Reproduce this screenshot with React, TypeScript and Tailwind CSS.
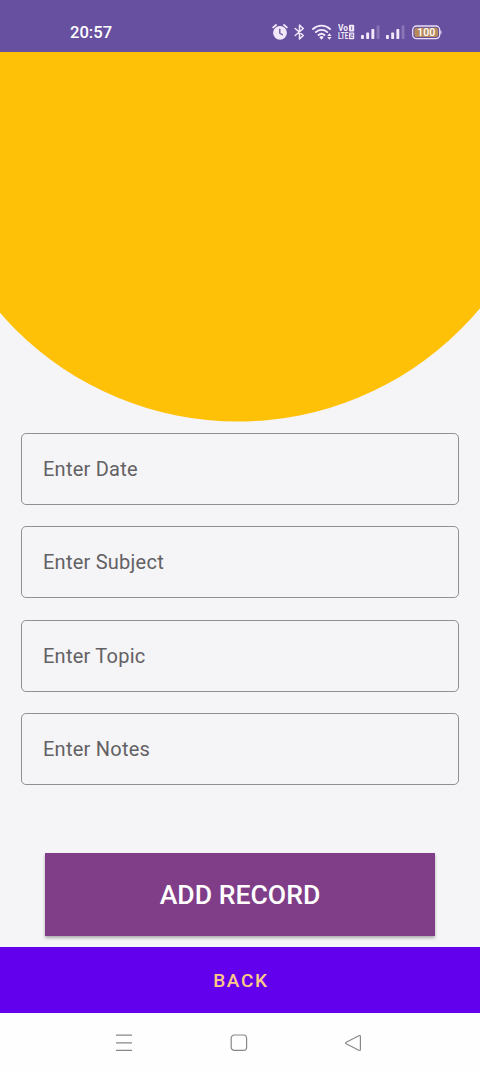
import React from 'react';

const fields: { name: string; label: string }[] = [
    { name: 'date', label: 'Enter Date' },
    { name: 'subject', label: 'Enter Subject' },
    { name: 'topic', label: 'Enter Topic' },
    { name: 'notes', label: 'Enter Notes' },
];

const AlarmIcon: React.FC = () => (
    <svg className="w-4 h-4.5 shrink-0" viewBox="0 0 16 18" fill="none">
        <path d="M1.2 4.4 4 2M14.8 4.4 12 2" stroke="#f1e9fa" strokeWidth="1.9" strokeLinecap="round" />
        <circle cx="8" cy="9.8" r="6.9" fill="#f1e9fa" />
        <path d="M7.8 6.2v4l2.6 1.6" stroke="#6750a0" strokeWidth="1.3" strokeLinecap="round" />
    </svg>
);

const BluetoothIcon: React.FC = () => (
    <svg className="w-[11px] h-4 shrink-0" viewBox="0 0 11 16" fill="none">
        <path d="M1.2 4.5 9.3 11.5 5.5 15V1L9.3 4.5 1.2 11.5" stroke="#f1e9fa" strokeWidth="1.5" strokeLinejoin="round" strokeLinecap="round" />
    </svg>
);

const WifiIcon: React.FC = () => (
    <svg className="w-[21px] h-4 shrink-0" viewBox="0 0 21 16" fill="none">
        <path d="M1 5a12.4 12.4 0 0 1 17 0M3.8 8.1a8.4 8.4 0 0 1 11.4 0M6.6 11a4.4 4.4 0 0 1 5.8 0" stroke="#f1e9fa" strokeWidth="1.9" strokeLinecap="round" />
        <path d="M9.5 15.8 7.3 13.2a3 3 0 0 1 4.4 0z" fill="#f1e9fa" />
        <path d="m15.2 11.9 2.2-2.7 2.2 2.7zM15.2 13l2.2 2.7 2.2-2.7z" fill="#f1e9fa" />
    </svg>
);

const VolteIcon: React.FC = () => (
    <svg className="w-[17px] h-4 shrink-0" viewBox="0 0 17 16">
        <text x="0" y="6.9" textLength="10" lengthAdjust="spacingAndGlyphs" className="font-[Roboto,sans-serif] text-[8.2px] font-bold" fill="#f1e9fa">Vo</text>
        <text x="0" y="15" textLength="10.5" lengthAdjust="spacingAndGlyphs" className="font-[Roboto,sans-serif] text-[8.2px] font-bold" fill="#f1e9fa">LTE</text>
        <rect x="11" y="0.8" width="5.2" height="6.8" rx="1" fill="#f1e9fa" />
        <rect x="11" y="8.4" width="5.2" height="6.8" rx="1" fill="#f1e9fa" />
        <path d="M13.6 2.4v3.6M12.3 10.1h2.4v1.7h-2.2v1.7h2.4" fill="none" stroke="#6750a0" strokeWidth="0.8" />
    </svg>
);

const SignalIcon: React.FC = () => (
    <svg className="w-[19px] h-4 shrink-0" viewBox="0 0 19 16" fill="#f1e9fa">
        <rect x="0" y="11" width="2.9" height="4" rx="0.7" />
        <rect x="5.2" y="8.4" width="2.9" height="6.6" rx="0.7" />
        <rect x="10.4" y="5" width="2.9" height="10" rx="0.7" />
        <rect x="15.6" y="1.4" width="2.9" height="13.6" rx="0.7" opacity="0.25" />
    </svg>
);

const BatteryIcon: React.FC = () => (
    <svg className="w-[30px] h-[15px] shrink-0" viewBox="0 0 30 15">
        <rect x="0.7" y="1" width="27" height="12.6" rx="3.8" fill="none" stroke="#e9def5" strokeWidth="1.3" />
        <rect x="2.4" y="2.7" width="23.6" height="9.2" rx="2.2" fill="#b78a5c" />
        <path d="M28.4 5.2c1.6.6 1.6 3.6 0 4.2z" fill="#e9def5" />
        <text x="14.2" y="11.1" textAnchor="middle" className="font-[Roboto,sans-serif] text-[10.5px] font-medium" fill="#fff">100</text>
    </svg>
);

const StatusBar: React.FC = () => (
    <header className="flex items-center h-[52px] pt-3 pl-[70px] pr-[38px] bg-[#6750a0] text-white">
        <span className="pt-0.5 text-[16.6px] leading-5 font-medium">20:57</span>
        <div className="flex items-center ml-auto">
            <AlarmIcon />
            <div className="ml-1.5"><BluetoothIcon /></div>
            <div className="ml-[7px]"><WifiIcon /></div>
            <div className="ml-[5px]"><VolteIcon /></div>
            <div className="ml-1.5"><SignalIcon /></div>
            <div className="ml-1.5"><SignalIcon /></div>
            <div className="ml-[7px]"><BatteryIcon /></div>
        </div>
    </header>
);

const NavigationBar: React.FC = () => (
    <nav className="flex items-center justify-between h-[59px] pl-[115px] pr-[117px] bg-[#fefefe]">
        <svg className="w-[18px] h-[18px]" viewBox="0 0 18 18" fill="none" stroke="#888" strokeWidth="1.3">
            <path d="M1 1.2h16M1 8.8h16M1 16.4h16" />
        </svg>
        <svg className="w-[18px] h-[18px]" viewBox="0 0 18 18" fill="none" stroke="#888" strokeWidth="1.2">
            <rect x="1.2" y="1" width="15.4" height="15.4" rx="3.2" />
        </svg>
        <svg className="w-[18px] h-[18px]" viewBox="0 0 18 18" fill="none" stroke="#888" strokeWidth="1.2" strokeLinejoin="round">
            <path d="M1.2 8.2 13.8 1.7Q15.4 1 15.4 2.7v12.6q0 1.7-1.6 1L1.2 9.8q-1.2-.8 0-1.6z" />
        </svg>
    </nav>
);

export default function App() {
    return (
        <div className="flex flex-col w-[480px] h-[1072px] overflow-hidden bg-[#f5f4f6] font-[Roboto,sans-serif]">
            <StatusBar />
            <svg className="block w-full h-[381px] shrink-0" viewBox="0 0 480 381">
                <circle cx="238" cy="54.5" r="315" fill="#ffc107" />
            </svg>
            <main className="flex flex-col h-[514px]">
                <form className="flex flex-col gap-[21.4px] px-[21.4px]">
                    {fields.map(({ name, label }) => (
                        <label
                            key={name}
                            className="flex items-center h-[72px] px-[20.6px] rounded-[5px] border border-[#919093] text-xl tracking-[0.24px] text-[#626164]"
                        >
                            {label}
                        </label>
                    ))}
                </form>
                <button className="w-[389.6px] h-[82.6px] mt-auto mb-[11.4px] mx-auto pt-0.5 bg-[#803e88] text-white text-[26.6px] font-medium shadow-[0_2px_3px_rgba(0,0,0,0.3)]">
                    ADD RECORD
                </button>
            </main>
            <button className="h-[66px] shrink-0 pt-0.5 pl-0.5 bg-[#6200ee] text-[#fbcb86] text-[19px] font-medium tracking-[1.7px]">
                BACK
            </button>
            <NavigationBar />
        </div>
    );
}
